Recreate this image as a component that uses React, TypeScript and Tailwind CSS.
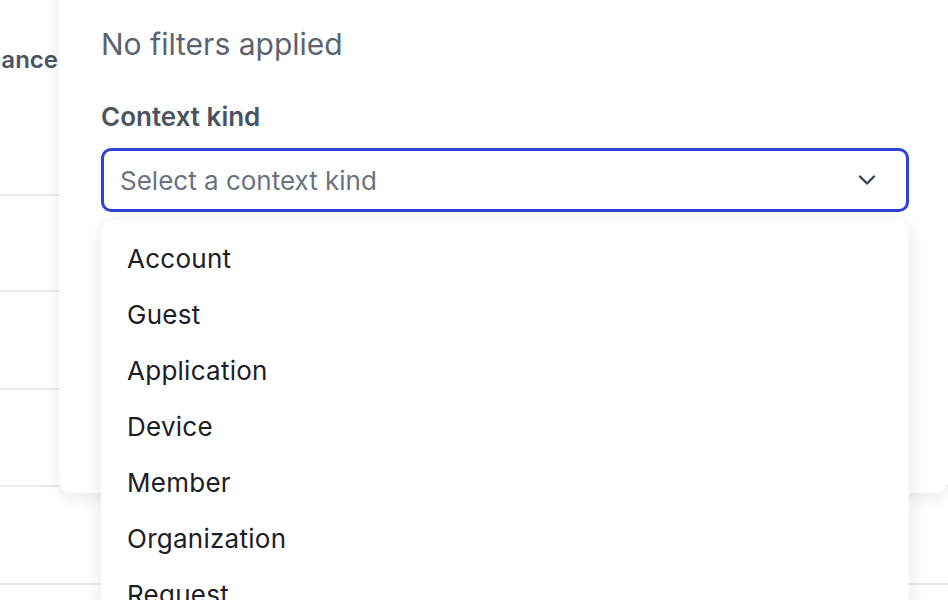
import React from "react";

const items = ["Account", "Guest", "Application", "Device", "Member", "Organization", "Request"];

export default function App() {
  return (
    <div
      className="relative w-[948px] h-[600px] overflow-hidden bg-white"
      style={{ fontFamily: "Inter, 'Noto Sans', sans-serif" }}
    >
      {/* background table */}
      <div className="flex flex-col">
        <div className="h-[196px] border-b-2 border-[#e8ecf0] flex justify-end pr-[890px] pt-[44px]">
          <span className="text-[24px] font-semibold text-[#4b5563] whitespace-nowrap leading-[32px]">Performance</span>
        </div>
        <div className="h-[96px] border-b-2 border-[#e8ecf0]" />
        <div className="h-[98px] border-b-2 border-[#e8ecf0]" />
        <div className="h-[97px] border-b-2 border-[#e8ecf0]" />
        <div className="h-[98px] border-b-2 border-[#e8ecf0]" />
      </div>

      {/* filter popover */}
      <div className="absolute left-[59px] top-[-20px] w-[889px] h-[513px] bg-white rounded-b-[12px] shadow-[0_4px_18px_rgba(0,0,0,0.09)] pl-[42px] pr-[39px] pt-[42px]">
        <div className="text-[30px] leading-[44px] text-[#5b6370]">No filters applied</div>
        <div className="mt-[35px] text-[26px] leading-[32px] font-semibold text-[#4b5360]">Context kind</div>
        <div className="mt-[15px] h-[64px] w-[808px] rounded-[10px] border-[3px] border-[#2f40d8] flex items-center justify-between pl-[16px] pr-[30px]">
          <span className="text-[26px] text-[#6b7280]">Select a context kind</span>
          <svg width="18" height="12" viewBox="0 0 18 12" fill="none" stroke="#374151" strokeWidth="2.4" strokeLinecap="round" strokeLinejoin="round">
            <path d="M2 2.5l7 7 7-7" />
          </svg>
        </div>
      </div>

      {/* dropdown menu */}
      <div className="absolute left-[101px] top-[220px] w-[808px] h-[420px] bg-white rounded-[12px] shadow-[0_4px_20px_rgba(0,0,0,0.10)] pt-[10px]">
        {items.map((it) => (
          <div key={it} className="h-[56px] flex items-center pl-[26px] text-[26px] tracking-[0.01em] text-[#1c2026]">
            {it}
          </div>
        ))}
      </div>
    </div>
  );
}
